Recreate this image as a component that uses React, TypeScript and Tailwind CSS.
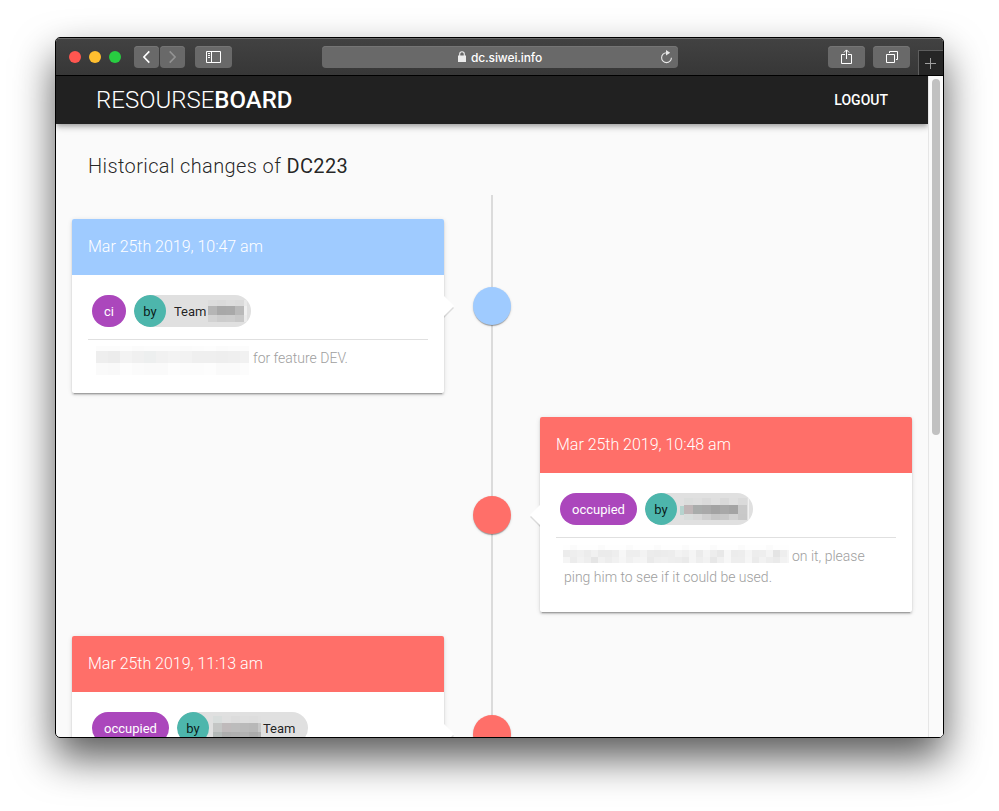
import React from "react";

type Row = { h: number; cells: string[] };

/* Redacted text: rows of coloured blocks */
function Mosaic({ rows, cell, className }: { rows: Row[]; cell: number; className: string }) {
  return (
    <span className={"flex flex-col overflow-hidden " + className}>
      {rows.map((r, i) => (
        <span key={i} className="flex shrink-0" style={{ height: r.h }}>
          {r.cells.map((c, j) => (
            <span key={j} className="shrink-0" style={{ width: cell, background: c }} />
          ))}
        </span>
      ))}
    </span>
  );
}

const teamRows: Row[] = [
  { h: 6, cells: ["#dcdcdc", "#dadada", "#dddddd", "#dbdbdb", "#e8e8e8"] },
  { h: 9, cells: ["#b5b5b5", "#a8a8a8", "#a9a9a9", "#b9b9b9", "#efefef"] },
  { h: 7, cells: ["#d2d2d2", "#cccccc", "#cdcdcd", "#c8c8c8", "#ebebeb"] },
];
const nameRows: Row[] = [
  { h: 7, cells: ["#dbdddc", "#dedede", "#dadada", "#dfdfdf", "#d9d9d9", "#dfdfdf", "#dadada", "#dfdfdf"] },
  { h: 9, cells: ["#bfb6b7", "#a9acab", "#a9a9a9", "#a3a3a3", "#a8a8a8", "#a4a4a4", "#c9c9c9", "#cbcbcb"] },
  { h: 6, cells: ["#d9dddc", "#d8d8d8", "#cfcfcf", "#c6c6c6", "#c8c8c8", "#d2d2d2", "#c8c8c8", "#dadada"] },
];
const systemRows: Row[] = [
  { h: 7, cells: ["#d8dddc", "#dfdfdf", "#dcdcdc", "#dedede", "#dddddd", "#dfdfdf"] },
  { h: 9, cells: ["#c4c6c5", "#bfbabb", "#bcbcbc", "#bababa", "#b8b8b8", "#c8c8c8"] },
  { h: 5, cells: ["#b4bab8", "#aeaeae", "#b0b0b0", "#b2b2b2", "#acacac", "#b2b2b2"] },
];
const noteRows: Row[] = [
  { h: 5, cells: ["#fcfcfc", "#fcfcfc", "#fdfdfd", "#fbfbfb", "#fcfcfc", "#fcfcfc", "#fcfcfc", "#fbfbfb", "#fcfcfc", "#fdfdfd", "#fbfbfb", "#fcfcfc", "#fcfcfc"] },
  { h: 12, cells: ["#eeeeee", "#ececec", "#f3f3f3", "#f0f0f0", "#edefef", "#f1f1f1", "#f3f3f3", "#f2f2f2", "#efefef", "#efefef", "#eeeeee", "#efefef", "#f1f1f1"] },
  { h: 12, cells: ["#fafafa", "#f9f9f9", "#fdfdfd", "#fbfbfb", "#fafafa", "#fafafa", "#fdfdfd", "#fcfcfc", "#fcfcfc", "#fdfdfd", "#fafafa", "#fafafa", "#fcfcfc"] },
];
const longRows: Row[] = [
  { h: 5, cells: Array.from({ length: 33 }, (_, i) => (i % 4 === 1 ? "#fbfbfb" : "#fefefe")) },
  {
    h: 7,
    cells: [
      "#ececec", "#eeeeee", "#f0f0f0", "#ececec", "#f1f1f1", "#ebebeb", "#ebebeb", "#eeeeee", "#f7f7f7", "#eeeeee", "#eeeeee",
      "#f3f3f3", "#ececec", "#ebebeb", "#ececec", "#ededed", "#f3f3f3", "#f0f0f0", "#f5f5f5", "#ebebeb", "#f4f4f4", "#ededed",
      "#e8e8e8", "#f7f7f7", "#ececec", "#ededed", "#f5f5f5", "#ededed", "#eeeeee", "#f4f4f4", "#e4e4e4", "#eeeeee", "#f5f5f5",
    ],
  },
  {
    h: 6,
    cells: [
      "#f5f5f5", "#ececec", "#f2f2f2", "#eeeeee", "#e5e5e5", "#f1f1f1", "#ededed", "#f1f1f1", "#f6f6f6", "#f0f0f0", "#f4f4f4",
      "#f5f5f5", "#eaeaea", "#efefef", "#f0f0f0", "#eeeeee", "#ededed", "#eaeaea", "#f5f5f5", "#eeeeee", "#f2f2f2", "#e7e7e7",
      "#f0f0f0", "#f7f7f7", "#eeeeee", "#eeeeee", "#f6f6f6", "#ebebeb", "#f2f2f2", "#ededed", "#eaeaea", "#f2f2f2", "#f5f5f5",
    ],
  },
];

function TagChip({ children }: { children: React.ReactNode }) {
  return (
    <span className="m-1 flex h-8 items-center rounded-full bg-[#ab47bc] px-3 pt-0.5 text-[13px] text-white">
      {children}
    </span>
  );
}

function ByChip({ width, children }: { width: string; children: React.ReactNode }) {
  return (
    <span className={"m-1 flex h-8 items-center overflow-hidden rounded-full bg-[#e0e0e0] text-[13px] text-black/87 " + width}>
      <span className="flex size-8 shrink-0 items-center justify-center rounded-full bg-[#4db6ac] pt-0.5">by</span>
      {children}
    </span>
  );
}

type EntryProps = {
  side: "left" | "right";
  color: string;
  date: string;
  chips: React.ReactNode;
  children: React.ReactNode;
};

function Entry({ side, color, date, chips, children }: EntryProps) {
  const left = side === "left";
  return (
    <div className={"flex shrink-0 items-center pb-6 " + (left ? "" : "flex-row-reverse")}>
      <div className="relative w-[372px] rounded-[2px] bg-white shadow-[0_3px_1px_-2px_rgba(0,0,0,0.2),0_2px_2px_0_rgba(0,0,0,0.14),0_1px_5px_0_rgba(0,0,0,0.12)]">
        <span
          className={
            "absolute top-[calc(50%-8px)] border-y-10 border-y-transparent " +
            (left ? "left-full border-l-10 border-l-black/12" : "right-full border-r-10 border-r-black/12")
          }
        />
        <span
          className={
            "absolute top-[calc(50%-10px)] border-y-10 border-y-transparent " +
            (left ? "left-full border-l-10 border-l-white" : "right-full border-r-10 border-r-white")
          }
        />
        <div className={"flex h-14 items-center rounded-t-[2px] px-4 text-[16px] font-light tracking-[-0.02px] text-white " + color}>{date}</div>
        <div className="p-4 pb-6">
          <div className="flex h-10">{chips}</div>
          <div className="mt-2 h-px bg-black/12" />
          <div className="px-2 pt-2 text-[14px] leading-[21px] font-light text-[#9e9e9e]">{children}</div>
        </div>
      </div>
      <div className="z-10 flex w-24 justify-center">
        <div className={"size-[38px] rounded-full shadow-[0_2px_1px_-1px_rgba(0,0,0,0.2),0_1px_1px_0_rgba(0,0,0,0.14),0_1px_3px_0_rgba(0,0,0,0.12)] " + color} />
      </div>
    </div>
  );
}

const button = "flex h-[22px] items-center justify-center rounded-[4px] bg-[#696969] shadow-[inset_0_1px_0_#757575] ";

function Toolbar() {
  return (
    <div className="flex h-[38px] shrink-0 items-center border-b border-black bg-linear-to-b from-[#424242] to-[#373737] pl-[13px] shadow-[inset_0_1px_0_#6a6a6a]">
      <div className="flex gap-2">
        <span className="size-3 rounded-full bg-[#ff5650]" />
        <span className="size-3 rounded-full bg-[#ffbf2f]" />
        <span className="size-3 rounded-full bg-[#28cd41]" />
      </div>
      <div className="ml-[13px] flex gap-px">
        <span className={button + "w-[25px]"}>
          <svg width="7" height="14" viewBox="0 0 7 14" fill="none" stroke="#fff" strokeWidth="1.6"><path d="M6.3 1.4.9 7l5.4 5.6" /></svg>
        </span>
        <span className={button + "w-[25px]"}>
          <svg width="7" height="14" viewBox="0 0 7 14" fill="none" stroke="#939393" strokeWidth="1.6"><path d="M.7 1.4 6.1 7 .7 12.6" /></svg>
        </span>
      </div>
      <span className={button + "ml-[10px] w-[37px]"}>
        <svg width="15" height="12" viewBox="0 0 15 12" fill="none" stroke="#fff"><path d="M.5.5h14v11H.5zM5.5.5v11M2 2.5h2M2 4.5h2M2 6.5h2" /></svg>
      </span>
      <div className={button + "relative ml-[90px] w-[356px] gap-[5px]"}>
        <svg width="8" height="11" viewBox="0 0 8 11"><path d="M0 4.5h8V11H0z" fill="#ececec" /><path d="M1.7 5V3a2.3 2.3 0 0 1 4.6 0v2" fill="none" stroke="#ececec" strokeWidth="1.1" /></svg>
        <span className="pt-0.5 font-['Inter'] text-[12px] leading-none font-medium tracking-[-0.12px] text-white">dc.siwei.info</span>
        <svg className="absolute top-[4px] right-[5px]" width="13" height="14" viewBox="0 0 13 14"><path d="M6.5 2.8a4.9 4.9 0 1 0 4.9 4.9" fill="none" stroke="#e8e8e8" strokeWidth="1.1" /><path d="M6 0v5.4l4.2-2.6z" fill="#e8e8e8" /></svg>
      </div>
      <span className={button + "ml-[150px] w-[37px]"}>
        <svg className="mb-px" width="11" height="15" viewBox="0 0 11 15" fill="none" stroke="#fff"><path d="M4 5.5H.5v9h10v-9H7M5.5 10V1M2.9 3.5 5.5.9l2.6 2.6" /></svg>
      </span>
      <span className={button + "ml-2 w-[37px]"}>
        <svg className="ml-px" width="12" height="12" viewBox="0 0 12 12" fill="none" stroke="#fff"><path d="M.5 3.5h8v8h-8zM3.5 2V.5h8v8H10" /></svg>
      </span>
      <span className="ml-2 flex h-[25px] w-[25px] items-center justify-center self-end border-t border-l border-[#5e5e5e] bg-[#262626]">
        <svg className="mt-px mr-px" width="11" height="11" viewBox="0 0 11 11" stroke="#a0a0a0"><path d="M5.5 0v11M0 5.5h11" /></svg>
      </span>
    </div>
  );
}

export default function App() {
  return (
    <div className="h-[811px] w-[999px] overflow-hidden bg-white pt-[37px] pl-[55px] font-['Roboto',sans-serif]">
      <div className="w-[889px] rounded-[5px] shadow-[0_20px_40px_rgba(0,0,0,0.65)]">
        <div className="flex h-[701px] flex-col overflow-hidden rounded-[5px] border border-black bg-[#fafafa]">
          <Toolbar />
          <div className="flex min-h-0 flex-1">
            <div className="flex w-[872px] flex-col overflow-hidden">
              <header className="flex h-12 shrink-0 items-center justify-between bg-[#212121] pr-10 pl-10 text-white shadow-[0_2px_4px_-1px_rgba(0,0,0,0.2),0_4px_5px_0_rgba(0,0,0,0.14),0_1px_10px_0_rgba(0,0,0,0.12)]">
                <h1 className="text-[24px] leading-none font-light">RESOURSE<span className="font-medium">BOARD</span></h1>
                <span className="text-[14px] font-medium">LOGOUT</span>
              </header>
              <h2 className="mt-7 ml-8 text-[20px] leading-7 font-light tracking-[0.38px] text-black/87">
                Historical changes of <span className="font-normal">DC223</span>
              </h2>
              <main className="relative mt-[15px] flex flex-1 flex-col px-4 pt-6">
                <div className="absolute inset-y-0 left-[435px] w-0.5 bg-black/12" />
                <Entry
                  side="left"
                  color="bg-[#9fcbff]"
                  date="Mar 25th 2019, 10:47 am"
                  chips={<>
                    <TagChip>ci</TagChip>
                    <ByChip width="w-[117px]"><span className="ml-2 pt-0.5">Team</span><Mosaic rows={teamRows} cell={9} className="ml-0.5 w-[39px]" /></ByChip>
                  </>}
                >
                  <div className="flex h-[21px]"><Mosaic rows={noteRows} cell={12} className="-mt-0.5 mr-1 h-[29px] w-[153px]" />for feature DEV.</div>
                </Entry>
                <Entry
                  side="right"
                  color="bg-[#ff6f69]"
                  date="Mar 25th 2019, 10:48 am"
                  chips={<>
                    <TagChip>occupied</TagChip>
                    <ByChip width="w-[108px]">
                      <span className="mt-0.5 ml-[3px] h-[9px] w-1 bg-[#b5d3ce]" />
                      <Mosaic rows={nameRows} cell={9} className="w-[63px]" />
                      <span className="ml-px h-[22px] w-px bg-[#f0f0f0]" />
                    </ByChip>
                  </>}
                >
                  <div className="flex h-[21px]"><Mosaic rows={longRows} cell={7} className="-mt-px mr-[3px] -ml-px h-[18px] w-[226px]" />on it, please</div>
                  <div>ping him to see if it could be used.</div>
                </Entry>
                <Entry
                  side="left"
                  color="bg-[#ff6f69]"
                  date="Mar 25th 2019, 11:13 am"
                  chips={<>
                    <TagChip>occupied</TagChip>
                    <ByChip width="w-[131px]"><Mosaic rows={systemRows} cell={9} className="mb-1 ml-1 w-[48px]" /><span className="ml-0.5 pt-0.5">Team</span></ByChip>
                  </>}
                >
                  <div className="h-[42px]" />
                </Entry>
              </main>
            </div>
            <div className="w-[15px] border-l border-[#e6e6e6] bg-[#fafafa] pt-[3px] pl-[3px]">
              <div className="h-[356px] w-2 rounded-full bg-[#c1c1c1]" />
            </div>
          </div>
        </div>
      </div>
    </div>
  );
}
